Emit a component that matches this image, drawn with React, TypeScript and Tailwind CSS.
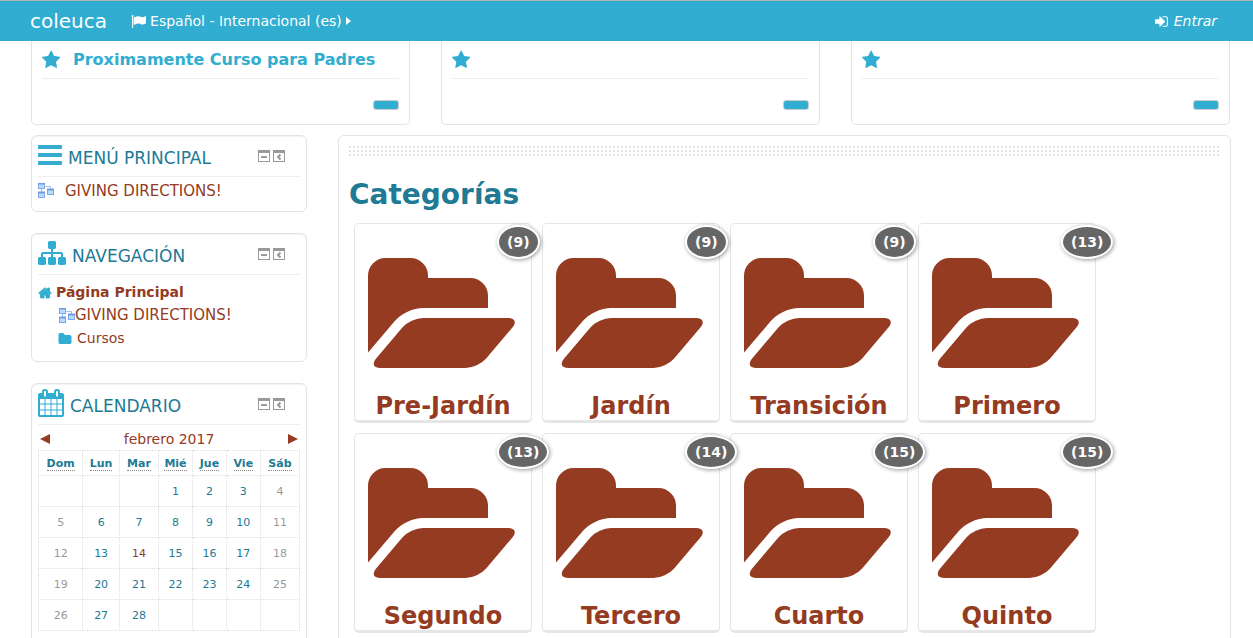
import type { ReactNode } from "react";

const ICONS = {
  star: "M1728 647q0 22-26 48l-363 354 86 500q1 7 1 20 0 21-10.5 35.5t-30.5 14.5q-19 0-40-12l-449-236-449 236q-22 12-40 12-21 0-31.5-14.5t-10.5-35.5q0-6 2-20l86-500-364-354q-25-27-25-48 0-37 56-46l502-73 225-455q19-41 49-41t49 41l225 455 502 73q56 9 56 46z",
  bars: "M1664 1344v128q0 26-19 45t-45 19h-1408q-26 0-45-19t-19-45v-128q0-26 19-45t45-19h1408q26 0 45 19t19 45zm0-512v128q0 26-19 45t-45 19h-1408q-26 0-45-19t-19-45v-128q0-26 19-45t45-19h1408q26 0 45 19t19 45zm0-512v128q0 26-19 45t-45 19h-1408q-26 0-45-19t-19-45v-128q0-26 19-45t45-19h1408q26 0 45 19t19 45z",
  sitemap: "M1792 1248v320q0 40-28 68t-68 28h-320q-40 0-68-28t-28-68v-320q0-40 28-68t68-28h96v-192h-512v192h96q40 0 68 28t28 68v320q0 40-28 68t-68 28h-320q-40 0-68-28t-28-68v-320q0-40 28-68t68-28h96v-192h-512v192h96q40 0 68 28t28 68v320q0 40-28 68t-68 28h-320q-40 0-68-28t-28-68v-320q0-40 28-68t68-28h96v-192q0-52 38-90t90-38h512v-192h-96q-40 0-68-28t-28-68v-320q0-40 28-68t68-28h320q40 0 68 28t28 68v320q0 40-28 68t-68 28h-96v192h512q52 0 90 38t38 90v192h96q40 0 68 28t28 68z",
  calendar: "M192 1664h288v-288h-288v288zm352 0h320v-288h-320v288zm-352-352h288v-320h-288v320zm352 0h320v-320h-320v320zm-352-384h288v-288h-288v288zm736 736h320v-288h-320v288zm-384-736h320v-288h-320v288zm768 736h288v-288h-288v288zm-384-352h320v-320h-320v320zm-352-864v-288q0-13-9.5-22.5t-22.5-9.5h-64q-13 0-22.5 9.5t-9.5 22.5v288q0 13 9.5 22.5t22.5 9.5h64q13 0 22.5-9.5t9.5-22.5zm736 864h288v-320h-288v320zm-384-384h320v-288h-320v288zm384 0h288v-288h-288v288zm32-480v-288q0-13-9.5-22.5t-22.5-9.5h-64q-13 0-22.5 9.5t-9.5 22.5v288q0 13 9.5 22.5t22.5 9.5h64q13 0 22.5-9.5t9.5-22.5zm384-64v1280q0 52-38 90t-90 38h-1408q-52 0-90-38t-38-90v-1280q0-52 38-90t90-38h128v-96q0-66 47-113t113-47h64q66 0 113 47t47 113v96h384v-96q0-66 47-113t113-47h64q66 0 113 47t47 113v96h128q52 0 90 38t38 90z",
  signIn: "M1312 896q0 26-19 45l-544 544q-19 19-45 19t-45-19-19-45v-288h-448q-26 0-45-19t-19-45v-384q0-26 19-45t45-19h448v-288q0-26 19-45t45-19 45 19l544 544q19 19 19 45zm352-352v704q0 119-84.5 203.5t-203.5 84.5h-320q-13 0-22.5-9.5t-9.5-22.5q0-4-1-20t-.5-26.5 3-23.5 10-19.5 20.5-6.5h320q66 0 113-47t47-113v-704q0-66-47-113t-113-47h-312l-11.5-1-11.5-3-8-5.5-7-9-2-13.5q0-4-1-20t-.5-26.5 3-23.5 10-19.5 20.5-6.5h320q119 0 203.5 84.5t84.5 203.5z",
  home: "M1472 992v480q0 26-19 45t-45 19h-384v-384h-256v384h-384q-26 0-45-19t-19-45v-480q0-1 .5-3t.5-3l575-474 575 474q1 2 1 6zm223-69l-62 74q-8 9-21 11h-3q-13 0-21-7l-692-577-692 577q-12 8-24 7-13-2-21-11l-62-74q-8-10-7-23.5t11-21.5l719-599q32-26 76-26t76 26l244 204v-195q0-14 9-23t23-9h192q14 0 23 9t9 23v408l219 182q10 8 11 21.5t-7 23.5z",
  folder: "M1728 608v704q0 92-66 158t-158 66h-1216q-92 0-158-66t-66-158v-960q0-92 66-158t158-66h320q92 0 158 66t66 158v32h672q92 0 158 66t66 158z",
  folderOpen: "M1815 952q0 31-31 66l-336 396q-43 51-120.5 86.5t-143.5 35.5h-1088q-34 0-60.5-13t-26.5-43q0-31 31-66l336-396q43-51 120.5-86.5t143.5-35.5h1088q34 0 60.5 13t26.5 43zm-343-344v160h-832q-94 0-197 47.5t-164 119.5l-337 396-5 6q0-4-.5-12.5t-.5-12.5v-960q0-92 66-158t158-66h320q92 0 158 66t66 158v32h544q92 0 158 66t66 158z",
  flag: "M320 256q0 72-64 110v1266q0 13-9.5 22.5t-22.5 9.5h-64q-13 0-22.5-9.5t-9.5-22.5v-1266q-64-38-64-110 0-53 37.5-90.5t90.5-37.5 90.5 37.5 37.5 90.5zm1472 64v763q0 25-12.5 38.5t-39.5 27.5q-215 116-369 116-61 0-123.5-22t-108.5-48-115.5-48-142.5-22q-192 0-464 146-17 9-33 9-26 0-45-19t-19-45v-742q0-32 31-55 21-14 79-43 236-120 421-120 107 0 200 29t219 88q38 19 88 19 54 0 117.5-21t110-47 88-47 54.5-21q26 0 45 19t19 45z",
};

type IconName = keyof typeof ICONS;

function Icon({ name, className, viewBox = "0 0 1792 1792" }: { name: IconName; className: string; viewBox?: string }) {
  return (
    <svg viewBox={viewBox} fill="currentColor" aria-hidden="true" className={className}>
      <path d={ICONS[name]} />
    </svg>
  );
}

function LabelIcon() {
  return (
    <svg viewBox="0 0 16 16" aria-hidden="true" className="h-4 w-4 shrink-0">
      <path d="M3.5 6v4M7.5 3.5h5V6" fill="none" stroke="#9dbcea" />
      {[[0.5, 0.5, 6], [9.5, 6.5, 6], [0.5, 9.5, 6]].map(([x, y, w]) => (
        <g key={`${x}-${y}`}>
          <rect x={x} y={y} width={w} height="5" fill="#b9dafb" stroke="#7fa8ea" />
          <path d={`M${x - 0.5} ${y}h${w + 1}`} stroke="#6f9ce6" strokeWidth="2" />
        </g>
      ))}
    </svg>
  );
}

function BlockActions() {
  return (
    <div className="mr-[15px] flex gap-[3px] pt-3.5 text-[#999]">
      <button type="button" aria-label="Ocultar bloque" className="h-3 w-3">
        <svg viewBox="0 0 12 12" className="h-3 w-3">
          <path d="M0 0h12v12H0zM1 3v8h10V3zM3 6h6v2H3z" fill="currentColor" fillRule="evenodd" />
        </svg>
      </button>
      <button type="button" aria-label="Minimizar bloque" className="h-3 w-3">
        <svg viewBox="0 0 12 12" className="h-3 w-3">
          <path d="M0 0h12v12H0zM1 3v8h10V3z" fill="currentColor" fillRule="evenodd" />
          <path d="M7.5 4.5L5 7l2.5 2.5" fill="none" stroke="currentColor" strokeWidth="2" />
        </svg>
      </button>
    </div>
  );
}

function Block({ title, icon, iconClass, viewBox, children }: {
  title: string;
  icon: IconName;
  iconClass: string;
  viewBox: string;
  children: ReactNode;
}) {
  return (
    <section className="rounded-md border border-[#e3e3e3] px-1.5 shadow-[inset_0_1px_1px_rgba(0,0,0,0.05)]">
      <header className="flex h-[41px] items-start justify-between border-b border-[#eee]">
        <div className="flex">
          <Icon name={icon} viewBox={viewBox} className={iconClass} />
          <h2 className="ml-1.5 pt-2.5 text-[17px] leading-6 text-[#217a94]">{title}</h2>
        </div>
        <BlockActions />
      </header>
      {children}
    </section>
  );
}

const promos = ["Proximamente Curso para Padres", "", ""];

const days = [
  { short: "Dom", full: "Domingo" },
  { short: "Lun", full: "Lunes" },
  { short: "Mar", full: "Martes" },
  { short: "Mié", full: "Miércoles" },
  { short: "Jue", full: "Jueves" },
  { short: "Vie", full: "Viernes" },
  { short: "Sáb", full: "Sábado" },
];

const weeks = [
  [0, 0, 0, 1, 2, 3, 4],
  [5, 6, 7, 8, 9, 10, 11],
  [12, 13, 14, 15, 16, 17, 18],
  [19, 20, 21, 22, 23, 24, 25],
  [26, 27, 28, 0, 0, 0, 0],
];

const today = 14;

const categories = [
  { name: "Pre-Jardín", count: 9 },
  { name: "Jardín", count: 9 },
  { name: "Transición", count: 9 },
  { name: "Primero", count: 13 },
  { name: "Segundo", count: 13 },
  { name: "Tercero", count: 14 },
  { name: "Cuarto", count: 15 },
  { name: "Quinto", count: 15 },
];

function dayColor(day: number, column: number) {
  if (day === today) return "text-[#943b21]";
  return column === 0 || column === 6 ? "text-[#999]" : "text-[#217a94]";
}

function Calendar() {
  return (
    <div className="pb-8">
      <div className="flex h-[25px] items-center justify-between px-0.5 pt-0.5">
        <a href="#anterior" aria-label="Mes anterior">
          <svg viewBox="0 0 10 10" className="block h-2.5 w-2.5"><path d="M0 5l10-5v10z" fill="currentColor" /></svg>
        </a>
        <a href="#mes">febrero 2017</a>
        <a href="#siguiente" aria-label="Mes siguiente">
          <svg viewBox="0 0 10 10" className="block h-2.5 w-2.5"><path d="M10 5L0 0v10z" fill="currentColor" /></svg>
        </a>
      </div>
      <table className="w-full table-fixed border-collapse text-center text-[11px]">
        <colgroup>
          <col className="w-[17%]" />
          <col className="w-[14%]" />
          <col className="w-[15%]" />
          <col className="w-[13%]" />
          <col className="w-[13%]" />
          <col className="w-[13%]" />
          <col className="w-[15%]" />
        </colgroup>
        <thead>
          <tr className="h-[25px]">
            {days.map((day) => (
              <th key={day.short} scope="col" className="border border-dotted border-[#ddd] p-0 pt-0.5 leading-3 text-[#217a94]">
                <abbr title={day.full} className="border-b border-dotted border-[#888] no-underline">{day.short}</abbr>
              </th>
            ))}
          </tr>
        </thead>
        <tbody>
          {weeks.map((week, i) => (
            <tr key={i} className="h-[31px]">
              {week.map((day, column) => (
                <td key={column} className={`border border-dotted border-[#ddd] p-0 pt-px ${dayColor(day, column)}`}>
                  {day || ""}
                </td>
              ))}
            </tr>
          ))}
        </tbody>
      </table>
    </div>
  );
}

export default function App() {
  return (
    <div className="min-h-screen bg-white font-['Verdana','DejaVu_Sans',sans-serif] text-sm text-[#943b21]">
      <nav className="flex h-[41px] items-center justify-between border-t border-[#b3b3b3] bg-[#30add1] pr-9 pl-[30px] text-white">
        <div className="flex items-center">
          <a href="#inicio" className="text-xl">coleuca</a>
          <a href="#idioma" className="ml-6 flex items-center">
            <Icon name="flag" className="mr-1 h-[15px] w-[15px]" />
            Español - Internacional (es)
            <svg viewBox="0 0 5 8" aria-hidden="true" className="ml-1 h-2 w-[5px]"><path d="M0 0l5 4-5 4z" fill="currentColor" /></svg>
          </a>
        </div>
        <a href="#entrar" className="flex items-center gap-[5px] italic">
          <Icon name="signIn" className="h-[15px] w-[15px]" />
          Entrar
        </a>
      </nav>

      <div className="grid grid-cols-3 gap-[31px] pr-[23px] pl-[31px]">
        {promos.map((title, i) => (
          <section key={i} className="h-[84px] rounded-b-[5px] border border-t-0 border-[#e3e3e3] px-2.5">
            <div className="flex h-[38px] items-center border-b border-[#eee] text-[#30add1]">
              <Icon name="star" viewBox="64 0 1728 1792" className="h-5 w-[19px]" />
              {title && <h2 className="ml-3 text-base font-bold">{title}</h2>}
            </div>
            <div className="flex justify-end pt-[21px]">
              <button type="button" aria-label="Leer más" className="h-2.5 w-[26px] rounded-[3px] border border-[#ccc] bg-[#30add1]" />
            </div>
          </section>
        ))}
      </div>

      <div className="flex items-stretch gap-[31px] pt-2.5 pr-[22px] pl-[31px]">
        <aside className="flex w-[276px] shrink-0 flex-col gap-[21px]">
          <Block title="MENÚ PRINCIPAL" icon="bars" viewBox="128 0 1536 1792" iconClass="mt-[5px] h-7 w-6 text-[#30add1]">
            <a href="#directions" className="flex items-center gap-[11px] pt-1 pb-2.5 text-[15px] leading-5">
              <LabelIcon />
              GIVING DIRECTIONS!
            </a>
          </Block>

          <Block title="NAVEGACIÓN" icon="sitemap" viewBox="0 0 1792 1792" iconClass="mt-[5px] h-7 w-7 text-[#30add1]">
            <ul className="pt-1.5 pb-[11px] leading-[23px]">
              <li>
                <a href="#principal" className="flex items-center gap-1 font-bold">
                  <Icon name="home" className="h-3.5 w-3.5 stroke-current stroke-[110] text-[#30add1]" />
                  Página Principal
                </a>
              </li>
              <li>
                <a href="#directions" className="flex items-center pl-[21px] text-[15px] leading-[23px]">
                  <LabelIcon />
                  GIVING DIRECTIONS!
                </a>
              </li>
              <li>
                <a href="#cursos" className="flex items-center gap-[5px] pl-5">
                  <Icon name="folder" className="h-3.5 w-3.5 text-[#30add1]" />
                  Cursos
                </a>
              </li>
            </ul>
          </Block>

          <Block title="CALENDARIO" icon="calendar" viewBox="64 0 1664 1792" iconClass="mt-[5px] h-7 w-[26px] text-[#30add1]">
            <Calendar />
          </Block>
        </aside>

        <main className="min-w-0 flex-1 rounded-md border border-[#e3e3e3] px-2.5 pt-2.5 pb-4">
          <div className="h-2.5 bg-[conic-gradient(from_270deg,#e3e3e3_25%,transparent_0)] bg-[length:4px_4px]" />
          <h1 className="mt-[21px] text-[28px] leading-9 font-bold text-[#217a94]">Categorías</h1>
          <div className="mt-2.5 ml-[5px] flex flex-wrap gap-2.5">
            {categories.map((category) => (
              <a
                key={category.name}
                href={`#${category.name}`}
                className="relative flex w-[178px] flex-col items-center rounded-[5px] border border-b-[3px] border-[#e6e6e6] pt-6"
              >
                <Icon name="folderOpen" viewBox="-64 0 1920 1792" className="h-[140px] w-[150px]" />
                <span className="mt-1 text-2xl leading-7 font-bold">{category.name}</span>
                <span className="absolute top-px left-[142px] z-10 rounded-[50%] border-2 border-white bg-[#666] px-2 py-[5px] text-sm font-bold text-white shadow-[1px_1px_4px_rgba(0,0,0,0.4)]">
                  ({category.count})
                </span>
              </a>
            ))}
          </div>
        </main>
      </div>
    </div>
  );
}
